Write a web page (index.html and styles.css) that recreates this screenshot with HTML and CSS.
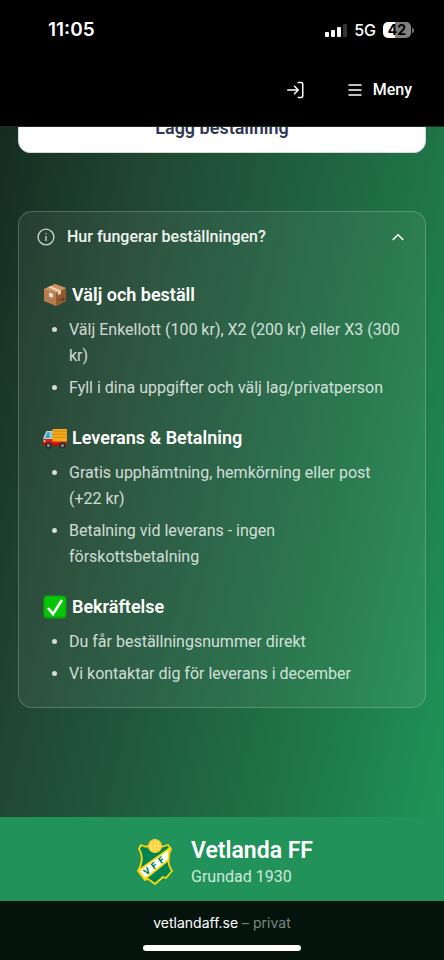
FILE: index.html
```html
<!DOCTYPE html>
<html lang="sv">
<head>
    <meta charset="UTF-8">
    <meta name="viewport" content="width=device-width, initial-scale=1">
    <title>Vetlanda FF</title>
    <link rel="stylesheet" href="styles.css">
</head>
<body>
    <header class="top">
        <div class="status-bar">
            <span class="clock">11:05</span>
            <div class="status-icons">
                <svg class="signal" width="22" height="15" viewBox="0 0 22 15" fill="#fff" aria-hidden="true">
                    <rect x="0" y="9" width="4" height="5" rx="1"/>
                    <rect x="6" y="7" width="4" height="7" rx="1"/>
                    <rect x="12" y="4" width="4" height="10" rx="1"/>
                    <rect x="18" y="1" width="4" height="13" rx="1" fill="#333"/>
                </svg>
                <span class="network">5G</span>
                <div class="battery"><span class="battery-level">42</span></div>
            </div>
        </div>
        <nav class="nav">
            <a class="nav-link" href="#login" aria-label="Logga in">
                <svg width="18" height="18" viewBox="0 0 24 24" fill="none" stroke="currentColor" stroke-width="2" stroke-linecap="round" stroke-linejoin="round">
                    <path d="M15 2h4a2 2 0 0 1 2 2v16a2 2 0 0 1-2 2h-4"/>
                    <path d="M10 17l5-5-5-5M15 12H1"/>
                </svg>
            </a>
            <button class="nav-link" type="button">
                <svg width="16" height="16" viewBox="0 0 16 16" fill="none" stroke="currentColor" stroke-width="1.5" stroke-linecap="round" aria-hidden="true">
                    <path d="M2 3h12M2 8h12M2 13h12"/>
                </svg>
                Meny
            </button>
        </nav>
    </header>

    <main class="content">
        <div class="order">
            <button class="order-button" type="button">Lägg beställning</button>
        </div>

        <details class="info-card" open>
            <summary class="info-title">
                <svg class="info-icon" width="18" height="18" viewBox="0 0 18 18" fill="none" stroke="currentColor" stroke-width="1.4" stroke-linecap="round" aria-hidden="true">
                    <circle cx="9" cy="9" r="7.9"/>
                    <path d="M9 8.4v4M9 5.7v.1"/>
                </svg>
                <span>Hur fungerar beställningen?</span>
                <svg class="chevron" width="14" height="14" viewBox="0 0 14 14" fill="none" stroke="#fff" stroke-width="1.6" stroke-linecap="round" stroke-linejoin="round" aria-hidden="true">
                    <path d="M2.200 9.500 7 4.700l4.800 4.800"/>
                </svg>
            </summary>
            <div class="info-body">
                <section>
                    <h3>
                        <svg width="24" height="24" viewBox="0 0 24 24" aria-hidden="true">
                            <path d="M1 6 12 1l11 4v13l-10 5L1 18z" fill="#b97c4b"/>
                            <path d="M13 10 23 5v13l-10 5z" fill="#925a31"/>
                            <path d="M1 6 12 1l11 4-10 5z" fill="#c9935f"/>
                            <path d="M5 4.200 8 3l10 4.500v3.300l-3 1.400V9z" fill="#e6cdb5"/>
                            <path d="M6 9.500l4 1.300v4L6 13.500z" fill="#dfe2df"/>
                            <path d="M16 17l2-.8M19.500 15.500l1.500-.7v2l-1.500.7z" stroke="#5c341c" fill="none"/>
                        </svg>
                        Välj och beställ
                    </h3>
                    <ul>
                        <li>Välj Enkellott (100 kr), X2 (200 kr) eller X3 (300 kr)</li>
                        <li>Fyll i dina uppgifter och välj lag/privatperson</li>
                    </ul>
                </section>
                <section>
                    <h3>
                        <svg width="24" height="24" viewBox="0 0 24 24" aria-hidden="true">
                            <path d="M3.500 5h7v9h-10V11z" fill="#c4d5d8"/>
                            <path d="M4.300 6.300h2.500V12H1.700z" fill="#3aa5bd"/>
                            <path d="M7.800 6.300h2V12h-2z" fill="#71c3d0"/>
                            <path d="M0.500 13h23v6.500h-23z" fill="#d71e17"/>
                            <path d="M9.500 3H24v12.500H9.500z" fill="#f5a91b"/>
                            <path d="M10 5.200h14M10 8.200h14M10 11.200h14" stroke="#d48a10"/>
                            <path d="M0 17.500h24V20H0z" fill="#b3130f"/>
                            <circle cx="5.500" cy="19.500" r="3.200" fill="#292d2e"/>
                            <circle cx="19.500" cy="19.500" r="3.200" fill="#292d2e"/>
                            <circle cx="5.500" cy="19.500" r="1.500" fill="#8a9595"/>
                            <circle cx="19.500" cy="19.500" r="1.500" fill="#8a9595"/>
                            <circle cx="1.500" cy="15" r="1" fill="#ffe9a0"/>
                        </svg>
                        Leverans &amp; Betalning
                    </h3>
                    <ul>
                        <li>Gratis upphämtning, hemkörning eller post (+22 kr)</li>
                        <li>Betalning vid leverans - ingen förskottsbetalning</li>
                    </ul>
                </section>
                <section>
                    <h3>
                        <svg width="24" height="24" viewBox="0 0 24 24" aria-hidden="true">
                            <rect x="0.500" y="0.500" width="23" height="23" rx="4" fill="#08a808"/>
                            <rect x="1.500" y="1.500" width="21" height="20" rx="3" fill="#07c407"/>
                            <path d="M5 13l5 6L19 5" fill="none" stroke="#fff" stroke-width="2.600"/>
                        </svg>
                        Bekräftelse
                    </h3>
                    <ul>
                        <li>Du får beställningsnummer direkt</li>
                        <li>Vi kontaktar dig för leverans i december</li>
                    </ul>
                </section>
            </div>
        </details>
    </main>

    <footer class="club">
        <svg class="club-logo" width="36" height="48" viewBox="0 0 36 48" aria-hidden="true">
            <path d="M4 7 8 8.500h18L31 7l3 4c-4 7-4 14 1 22l-6 7-3-1-8 7-7-5-3 1-7-9C6 24 6 17 2 11z" fill="#008454" stroke="#ffd60a" stroke-width="1.800" stroke-linejoin="round"/>
            <path d="M1.500 32.500 33 10c-1 4-1.500 8-1.500 12L8 41z" fill="#fff" stroke="#ffd60a" stroke-width="1.800" stroke-linejoin="round"/>
            <g transform="translate(20 28) rotate(-38)" fill="#008454" font-family="Roboto, sans-serif" font-size="9" font-weight="900" text-anchor="middle">
                <text x="-11" y="1">V</text>
                <text x="-2" y="1">F</text>
                <text x="7" y="1">F</text>
            </g>
            <circle cx="18" cy="8" r="7" fill="#ffd02b"/>
            <path d="M14.500 4.500h7v7h-7zM18 1v3.500M18 11.500V15M11 8h3.500M21.500 8H25M18 4.500v7M14.500 8h7" fill="none" stroke="#ffe98a" stroke-width=".8"/>
        </svg>
        <div>
            <p class="club-name">Vetlanda FF</p>
            <p class="club-founded">Grundad 1930</p>
        </div>
    </footer>

    <div class="browser-bar">
        <p class="address">vetlandaff.se <span>– privat</span></p>
        <div class="home-indicator"></div>
    </div>
</body>
</html>
```

FILE: styles.css
```css
:root {
    --green: #21935a;
    --muted: rgba(255, 255, 255, 0.8);
    --card-border: rgba(255, 255, 255, 0.2);
}

* {
    box-sizing: border-box;
}

body {
    margin: 0;
    min-height: 100vh;
    display: flex;
    flex-direction: column;
    background: #000;
    color: #fff;
    font-family: Roboto, sans-serif;
    font-size: 16px;
    line-height: 26px;
}

h3,
p,
ul {
    margin: 0;
    padding: 0;
}

svg {
    display: block;
    flex-shrink: 0;
}

button {
    border: none;
    font: inherit;
    cursor: pointer;
}

/* Top */
.top {
    border-bottom: 1px solid #1c2a22;
}

.status-bar {
    display: flex;
    justify-content: space-between;
    align-items: center;
    height: 60px;
    padding: 0 30px 0 48px;
    font-family: Inter, sans-serif;
}

.clock {
    font-size: 19px;
    font-weight: 600;
}

.status-icons {
    display: flex;
    align-items: center;
    gap: 7px;
}

.network {
    font-size: 16px;
    font-weight: 500;
}

.battery {
    display: flex;
    align-items: center;
}

.battery::after {
    content: "";
    width: 2px;
    height: 5px;
    margin-left: 1px;
    border-radius: 0 2px 2px 0;
    background: #777;
}

.battery-level {
    width: 28px;
    border-radius: 5px;
    background: linear-gradient(90deg, #fff 42%, #808080 42%);
    color: #000;
    font-size: 14px;
    font-weight: 700;
    line-height: 16px;
    text-align: center;
}

.nav {
    display: flex;
    justify-content: flex-end;
    align-items: center;
    gap: 42px;
    height: 66px;
    padding: 0 32px 6px;
}

.nav-link {
    display: flex;
    align-items: center;
    gap: 10px;
    padding: 0;
    background: none;
    color: #fff;
    font-weight: 500;
}

/* Content */
.content {
    flex: 1;
    padding: 0 18px 109px;
    background: linear-gradient(103deg, #152c20 0%, #214733 26%, #205a3d 46%, #1f7647 74%, #1f9459 100%);
}

.order {
    display: flex;
    align-items: flex-end;
    height: 26px;
    margin-bottom: 58px;
    overflow: hidden;
}

.order-button {
    flex: 1;
    height: 50px;
    flex-shrink: 0;
    border: 1px solid #d5dad8;
    border-radius: 12px;
    background: #fff;
    color: #303850;
    font-size: 18px;
    font-weight: 600;
}

.info-card {
    border: 1px solid var(--card-border);
    border-radius: 14px;
    background: rgba(255, 255, 255, 0.06);
}

.info-title {
    display: flex;
    align-items: center;
    gap: 12px;
    height: 50px;
    padding: 0 20px 0 18px;
    color: #eef4f0;
    font-weight: 500;
    list-style: none;
    cursor: pointer;
}

.info-icon {
    color: #c9d4ce;
}

.chevron {
    margin-left: auto;
}

.info-body {
    display: flex;
    flex-direction: column;
    gap: 24px;
    padding: 20px 24px;
}

.info-body h3 {
    display: flex;
    align-items: center;
    gap: 5px;
    margin-bottom: 9px;
    font-size: 18px;
    font-weight: 600;
}

.info-body ul {
    display: flex;
    flex-direction: column;
    gap: 6px;
    padding-left: 26px;
    color: var(--muted);
}

/* Footer */
.club {
    display: flex;
    justify-content: center;
    align-items: flex-start;
    gap: 18px;
    padding: 21px 18px 11px 24px;
    background: var(--green);
}

.club-name {
    font-size: 23px;
    font-weight: 600;
}

.club-founded {
    color: var(--muted);
}

.browser-bar {
    display: flex;
    flex-direction: column;
    align-items: center;
    gap: 9px;
    padding: 9px 0;
    background: #04140c;
}

.address {
    font-family: Inter, sans-serif;
    font-size: 14px;
}

.address span {
    color: #7d8682;
}

.home-indicator {
    width: 158px;
    height: 6px;
    border-radius: 3px;
    background: #fff;
}
```
